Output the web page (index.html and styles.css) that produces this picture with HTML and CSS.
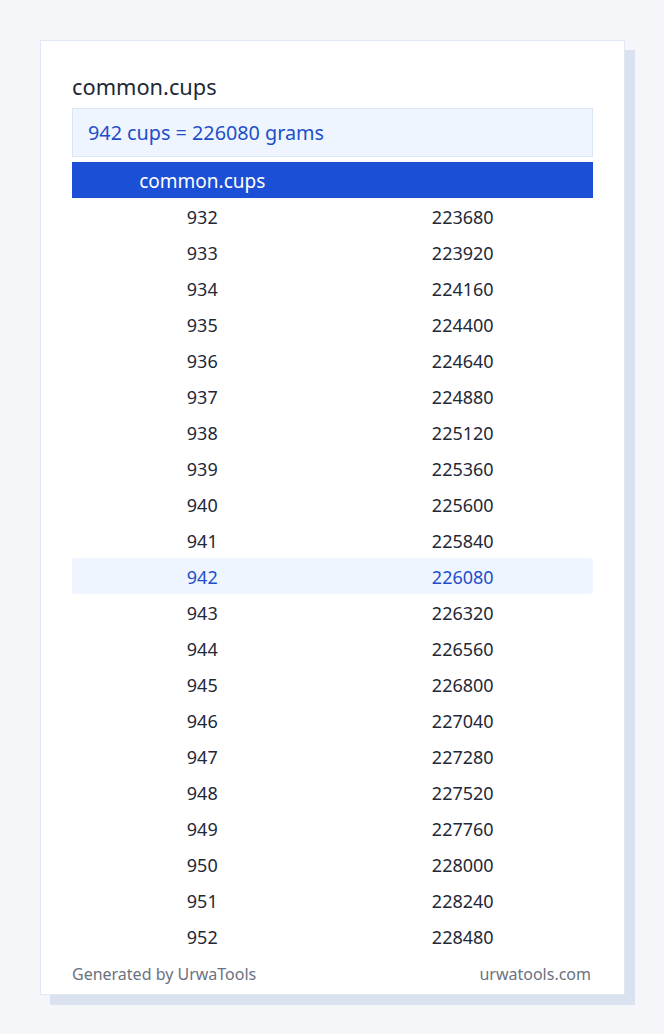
FILE: index.html
```
<!DOCTYPE html>
<html>
    <head>
        <meta charset="utf-8">
        <title>common.cups</title>
        <link rel="stylesheet" href="styles.css">
    </head>
    <body>
        <div class="card">
            <div class="title">common.cups</div>
            <div class="result">942 cups = 226080 grams</div>
            <table class="table">
                <tr class="head"><th>common.cups</th><th></th></tr>
                <tr><td>932</td><td>223680</td></tr>
                <tr><td>933</td><td>223920</td></tr>
                <tr><td>934</td><td>224160</td></tr>
                <tr><td>935</td><td>224400</td></tr>
                <tr><td>936</td><td>224640</td></tr>
                <tr><td>937</td><td>224880</td></tr>
                <tr><td>938</td><td>225120</td></tr>
                <tr><td>939</td><td>225360</td></tr>
                <tr><td>940</td><td>225600</td></tr>
                <tr><td>941</td><td>225840</td></tr>
                <tr class="current"><td>942</td><td>226080</td></tr>
                <tr><td>943</td><td>226320</td></tr>
                <tr><td>944</td><td>226560</td></tr>
                <tr><td>945</td><td>226800</td></tr>
                <tr><td>946</td><td>227040</td></tr>
                <tr><td>947</td><td>227280</td></tr>
                <tr><td>948</td><td>227520</td></tr>
                <tr><td>949</td><td>227760</td></tr>
                <tr><td>950</td><td>228000</td></tr>
                <tr><td>951</td><td>228240</td></tr>
                <tr><td>952</td><td>228480</td></tr>
            </table>
            <div class="footer">
                <span>Generated by UrwaTools</span>
                <span>urwatools.com</span>
            </div>
        </div>
    </body>
</html>
```

FILE: styles.css
```
html, body {
    margin: 0;
    background: #f4f6fa;
    font-family: "Noto Sans", "Open Sans", sans-serif;
    color: #1f2937;
}

body {
    padding: 40px;
}

.card {
    width: 521px;
    background: #ffffff;
    border: 1px solid #e1e7f3;
    box-shadow: 10px 10px 0 #dbe2ef;
    padding: 30px 31px 9px 31px;
}

.title {
    font-size: 21.8px;
    line-height: 32px;
    margin-bottom: 5px;
}

.result {
    background: #eef5fe;
    border: 1px solid #dae6f6;
    color: #1e4fc9;
    font-size: 19.8px;
    line-height: 46px;
    padding: 1px 0 0 15px;
    margin-bottom: 5px;
}

.table {
    width: 100%;
    border-collapse: collapse;
    font-size: 18px;
}

.table th, .table td {
    width: 50%;
    height: 36px;
    padding: 1px 0 0 0;
    line-height: 24px;
    text-align: center;
    box-sizing: border-box;
}

.head {
    background: #1b4fd6;
    color: #ffffff;
}

.head th {
    font-weight: normal;
    font-size: 19px;
}

.current td {
    background: #eef5fe;
    color: #1e4fc9;
}

.current td:first-child {
    border-radius: 3px 0 0 3px;
}

.current td:last-child {
    border-radius: 0 3px 3px 0;
}

.footer {
    display: flex;
    justify-content: space-between;
    font-size: 16px;
    line-height: 22px;
    color: #6b7280;
    padding: 9px 2px 0 0;
}
```
